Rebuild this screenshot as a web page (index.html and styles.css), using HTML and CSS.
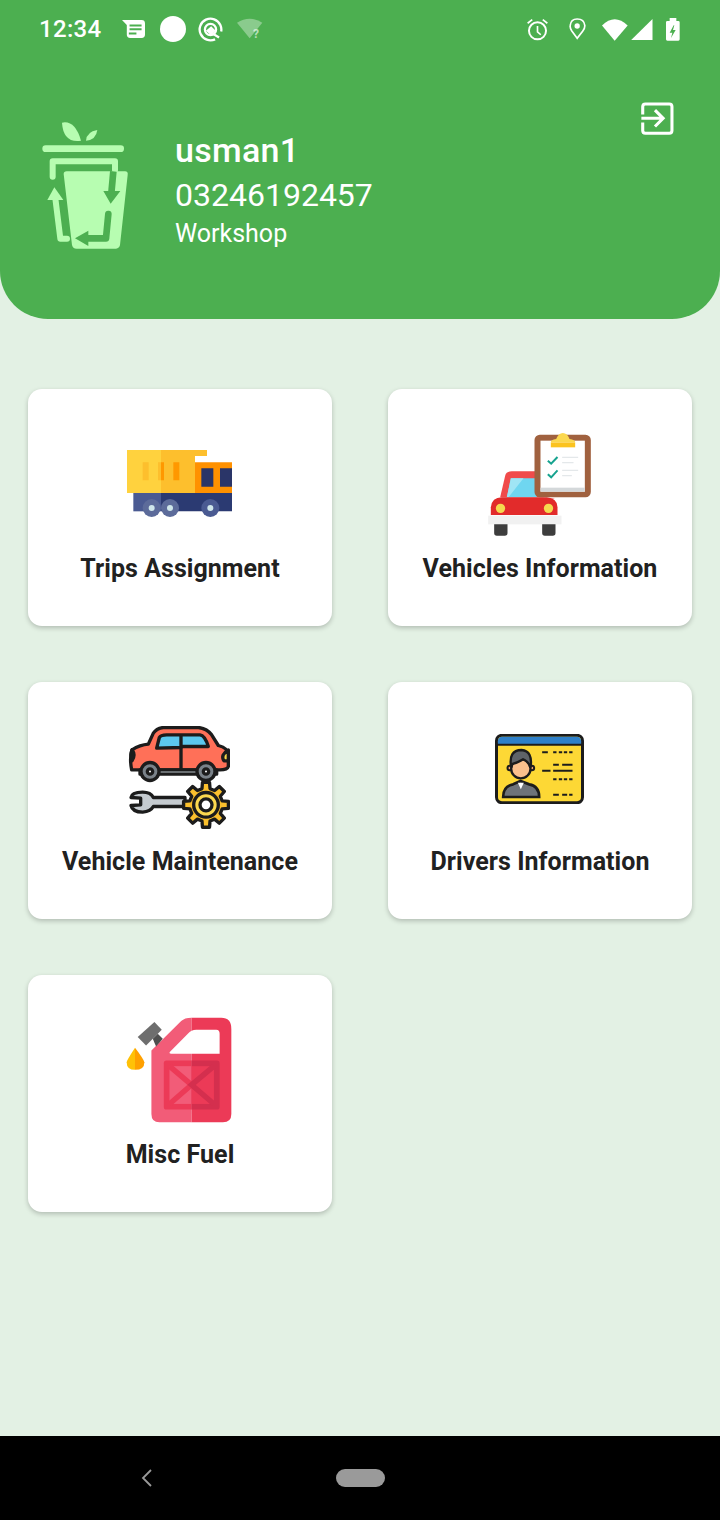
FILE: index.html
```html
<!DOCTYPE html>
<html lang="en">
<head>
  <meta charset="UTF-8">
  <title>Dashboard</title>
  <link rel="stylesheet" href="styles.css">
</head>
<body>
  <div id="page">
    <header id="header">
      <div id="status-bar">
        <span id="clock">12:34</span>
        <svg class="st-news" viewBox="368 58 67 52" width="23" height="18">
          <path fill="#fff" d="M368 58H425Q435 58 435 68V100Q435 110 425 110H392Q382 110 382 100V72Z"/>
          <path fill="#4caf50" d="M390 71H425V77H390ZM390 82H425V88H390ZM388 94H410V100H388Z"/>
        </svg>
        <span class="st-dot"></span>
        <svg class="st-ring" viewBox="596 50 76 76" width="25" height="25">
          <circle cx="634" cy="88" r="33" fill="none" stroke="#fff" stroke-width="7" stroke-dasharray="175 32" transform="rotate(65 634 88)"/>
          <circle cx="634" cy="88" r="17" fill="none" stroke="#fff" stroke-width="7"/>
          <path fill="#fff" d="M620 92L636 78L650 92L636 106Z"/>
          <path stroke="#fff" stroke-width="7" d="M640 100L660 112"/>
        </svg>
        <svg class="st-wifi-q" viewBox="712 48 84 72" width="28" height="24">
          <path fill="#fff" opacity=".35" d="M712 65Q750 42 788 65L750 112Z"/>
          <text x="760" y="111" class="st-q">?</text>
        </svg>
        <div id="status-right">
          <svg viewBox="80 48 68 70" width="23" height="23">
            <circle cx="114" cy="87" r="26" fill="none" stroke="#fff" stroke-width="6"/>
            <path fill="none" stroke="#fff" stroke-width="5" d="M114 72V90L124 99M84 64L98 53M144 64L130 53"/>
          </svg>
          <svg class="st-pin" viewBox="209 49 50 66" width="17" height="22">
            <path fill="none" stroke="#fff" stroke-width="5" d="M233 110L217 88Q211 79 212 72Q214 52 233 52Q254 52 256 72Q256 80 250 88Z"/>
            <circle cx="233" cy="73" r="8" fill="#fff"/>
          </svg>
          <svg class="st-wifi" viewBox="309 44 78 68" width="26" height="23">
            <path fill="#fff" d="M309 66Q347 28 386 66L347 112Z"/>
          </svg>
          <svg class="st-signal" viewBox="394 48 66 64" width="22" height="21">
            <path fill="#fff" d="M459 48V112H394Z"/>
          </svg>
          <svg class="st-batt" viewBox="499 48 42 69" width="14" height="23">
            <path fill="#fff" d="M510 48H530V57H536Q540 57 540 61V112Q540 116 536 116H503Q499 116 499 112V61Q499 57 503 57H510Z"/>
            <path fill="#4caf50" d="M522 70L510 92H518L514 108L528 84H520L524 70Z"/>
          </svg>
        </div>
      </div>

      <div id="profile">
        <svg id="logo" viewBox="60 30 270 390" width="90" height="130">
          <g fill="#b7fdb1">
            <path d="M126 38Q165 30 183 92Q130 100 126 38Z"/>
            <path d="M232 60Q228 90 198 92Q200 65 232 60Z"/>
            <rect x="67" y="106" width="245" height="20" rx="10"/>
            <path d="M131 192Q131 184 140 184H315Q325 184 323 195L300 405Q298 415 288 416H170Q158 416 156 405Z"/>
            <path d="M82 270H130L103 232Z"/>
          </g>
          <g fill="none" stroke="#b7fdb1" stroke-width="18" stroke-linecap="round" stroke-linejoin="round">
            <path d="M98 200V154H285V180"/>
            <path d="M141 386H121L106 265"/>
          </g>
          <g fill="none" stroke="#4caf50" stroke-width="20" stroke-linejoin="round">
            <path d="M280 184L274 250"/>
            <path stroke-linecap="round" d="M265 312L258 385H205"/>
          </g>
          <path fill="#4caf50" d="M250 243H301L272 281ZM205 362L165 385L205 408Z"/>
        </svg>
        <div id="profile-info">
          <div id="user-name">usman1</div>
          <div id="user-phone">03246192457</div>
          <div id="user-role">Workshop</div>
        </div>
        <svg id="exit-icon" viewBox="420 308 100 100" width="34" height="34">
          <path fill="none" stroke="#fff" stroke-width="9" d="M428 345V322Q428 314 436 314H506Q514 314 514 322V392Q514 400 506 400H436Q428 400 428 392V368"/>
          <path fill="none" stroke="#fff" stroke-width="9" d="M424 356H488M464 332L488 356L464 380"/>
        </svg>
      </div>
    </header>

    <main id="menu-grid">
      <div class="card">
        <div class="card-icon">
          <svg viewBox="51 44 315 204" width="105" height="68">
            <path fill="#ffd23e" d="M51 44H153V173H51Z"/>
            <path fill="#fdbf2d" d="M153 44H291V62H255V173H153Z"/>
            <path fill="#ff9100" d="M255 81H366V173H255Z"/>
            <path fill="#fdbf2d" d="M98 81H116V135H98ZM144 81H153V135H144Z"/>
            <path fill="#ff9800" d="M153 81H162V135H153ZM190 81H208V135H190Z"/>
            <path fill="#2a3568" d="M274 99H310V154H274ZM330 99H366V154H330Z"/>
            <path fill="#4a5a92" d="M70 173H153V228H70Z"/>
            <path fill="#2b3a72" d="M153 173H366V228H153Z"/>
            <circle cx="125" cy="218" r="27" fill="#5c6b9a"/>
            <circle cx="180" cy="218" r="27" fill="#5c6b9a"/>
            <circle cx="301" cy="218" r="27" fill="#4a5a92"/>
            <circle cx="125" cy="218" r="9" fill="#cfe6ea"/>
            <circle cx="180" cy="218" r="9" fill="#cfe6ea"/>
            <circle cx="301" cy="218" r="9" fill="#cfe6ea"/>
          </svg>
        </div>
        <div class="card-label">Trips Assignment</div>
      </div>

      <div class="card">
        <div class="card-icon">
          <svg viewBox="24 22 308 309" width="103" height="103">
            <path fill="#f04b4b" d="M60 215L75 150Q78 137 95 137H190V215Z"/>
            <path fill="#6fd6f0" d="M80 215L92 158H170V215Z"/>
            <path fill="#a0e5f5" d="M80 215L92 158H130L85 215Z"/>
            <path fill="#e22b2b" d="M32 268V245Q35 215 65 215H200Q232 218 232 245V268Z"/>
            <circle cx="61" cy="248" r="14" fill="#f5d94f"/>
            <circle cx="205" cy="248" r="14" fill="#f5d94f"/>
            <rect x="24" y="270" width="220" height="26" fill="#f1f1f1"/>
            <path fill="#3d3d3d" d="M42 296H82V322Q82 330 74 330H50Q42 330 42 322ZM186 296H226V322Q226 330 218 330H194Q186 330 186 322Z"/>
            <rect x="163" y="27" width="169" height="188" rx="16" fill="#a0613f"/>
            <rect x="181" y="45" width="133" height="153" fill="#fff"/>
            <rect x="181" y="186" width="133" height="12" fill="#d4d8da"/>
            <path fill="#fbc31f" d="M212 65V50H285V65Z"/>
            <path fill="#fbd84f" d="M212 50Q212 42 228 40Q235 22 248 22Q262 22 268 40Q285 42 285 50Z"/>
            <path fill="none" stroke="#16a38f" stroke-width="6" d="M203 105L213 114L232 94M203 146L213 155L232 134"/>
            <path fill="none" stroke="#e4e8ea" stroke-width="4" d="M246 95H294M246 111H280M246 134H294M246 150H275"/>
          </svg>
        </div>
        <div class="card-label">Vehicles Information</div>
      </div>

      <div class="card">
        <div class="card-icon">
          <svg viewBox="24 14 306 308" width="102" height="103">
            <g stroke="#1c1c1c" stroke-width="10" stroke-linejoin="round">
              <path fill="#ff7058" d="M35 145Q28 110 36 85Q60 70 85 68L100 35Q110 20 130 18H235Q260 20 275 40L295 72Q325 80 325 100V135Q322 145 300 145Z"/>
              <path fill="#5cc8ee" d="M110 80L118 48Q122 40 140 40H183V78ZM183 40H240Q255 42 265 75H183Z"/>
              <path fill="none" d="M183 78V145"/>
              <path fill="#f9d84a" d="M36 85Q48 100 36 118Q30 100 36 85ZM325 85Q300 100 312 118L325 118Z"/>
              <rect x="60" y="145" width="230" height="13" fill="#b8c2c8"/>
              <circle cx="90" cy="150" r="27" fill="#7a8289"/>
              <circle cx="258" cy="150" r="27" fill="#7a8289"/>
              <circle cx="90" cy="150" r="8" fill="#fff"/>
              <circle cx="258" cy="150" r="8" fill="#fff"/>
              <path fill="#c5cbd0" d="M68 212Q35 212 33 228L62 230V250L33 252Q38 272 68 272Q92 270 100 255H195V228H100Q92 212 68 212Z"/>
              <path fill="#fbc02d" transform="translate(258 250)" d="M48.5 -12.1L67.2 -10.6V10.6L48.5 12.1L42.9 25.7L55 40L40 55L25.7 42.9L12.1 48.5L10.6 67.2H-10.6L-12.1 48.5L-25.7 42.9L-40 55L-55 40L-42.9 25.7L-48.5 12.1L-67.2 10.6V-10.6L-48.5 -12.1L-42.9 -25.7L-55 -40L-40 -55L-25.7 -42.9L-12.1 -48.5L-10.6 -67.2H10.6L12.1 -48.5L25.7 -42.9L40 -55L55 -40L42.9 -25.7Z"/>
              <circle cx="258" cy="250" r="37" fill="#fbd84f"/>
              <circle cx="258" cy="250" r="18" fill="#fff"/>
            </g>
          </svg>
        </div>
        <div class="card-label">Vehicle Maintenance</div>
      </div>

      <div class="card">
        <div class="card-icon">
          <svg class="icon-license" viewBox="16 14 266 210" width="89" height="70">
            <rect x="20" y="18" width="258" height="202" rx="16" fill="#fdd835" stroke="#1c1c1c" stroke-width="9"/>
            <path fill="#2f80c8" d="M24 44V36Q24 22 38 22H260Q274 22 274 36V44Z"/>
            <path stroke="#1c1c1c" stroke-width="6" d="M22 46H276"/>
            <path fill="#6e7379" stroke="#1c1c1c" stroke-width="8" d="M40 203Q40 170 70 165L92 155L118 165Q148 170 148 203Z"/>
            <path fill="#fff" d="M84 160H102L93 180Z"/>
            <circle cx="60" cy="116" r="7" fill="#f9a66c" stroke="#1c1c1c" stroke-width="6"/>
            <circle cx="126" cy="116" r="7" fill="#f9a66c" stroke="#1c1c1c" stroke-width="6"/>
            <circle cx="93" cy="118" r="29" fill="#fbc08c" stroke="#1c1c1c" stroke-width="7"/>
            <path fill="#5f6368" stroke="#1c1c1c" stroke-width="7" d="M64 115Q55 62 95 62Q130 65 122 115Q115 95 100 90Q85 100 64 105Z"/>
            <path fill="#1c1c1c" d="M157 66H174V72H157ZM190 66H200V72H190ZM207 66H217V72H207ZM222 66H232V72H222ZM238 66H248V72H238ZM190 103H207V109H190ZM217 103H248V109H217ZM157 121H182V127H157ZM190 121H248V127H190ZM190 147H200V153H190ZM207 147H217V153H207ZM222 147H232V153H222ZM238 147H248V153H238ZM190 193H207V199H190ZM217 193H232V199H217ZM238 193H248V199H238Z"/>
          </svg>
        </div>
        <div class="card-label">Drivers Information</div>
      </div>

      <div class="card">
        <div class="card-icon">
          <svg viewBox="20 20 317 317" width="106" height="106">
            <path fill="#f25c78" d="M96 120L185 32Q195 22 216 22V335H120Q96 335 96 310Z"/>
            <path fill="#ec3a57" d="M216 22H305Q335 22 335 55V310Q335 335 310 335H216Z"/>
            <path fill="#4f4f4f" d="M100 85L115 70L130 85L110 108Z"/>
            <path fill="#6e6e6e" d="M105 35L127 58L80 105L55 80Z"/>
            <path fill="#fff" d="M151 125L205 70Q215 58 230 58H290Q300 58 300 70V130H155Q148 130 151 125Z"/>
            <path fill="#ec3a57" d="M133 158Q133 150 141 150H216V297H141Q133 297 133 289Z"/>
            <path fill="#d42f4e" d="M216 150H292Q300 150 300 158V289Q300 297 292 297H216Z"/>
            <path fill="#f25c78" d="M150 167H216V280H150Z"/>
            <path fill="#ec3a57" d="M216 167H283V280H216Z"/>
            <path fill="none" stroke="#ec3a57" stroke-width="16" d="M150 167L216 223L150 280"/>
            <path fill="none" stroke="#d42f4e" stroke-width="16" d="M283 167L216 223L283 280"/>
            <path fill="#ffc107" d="M47 112Q22 150 22 155Q22 178 47 178Z"/>
            <path fill="#ffa000" d="M47 112Q72 145 75 155Q75 178 47 178Z"/>
          </svg>
        </div>
        <div class="card-label">Misc Fuel</div>
      </div>
    </main>

    <footer id="nav-bar">
      <svg id="nav-back" viewBox="0 0 11 18" width="11" height="18">
        <path fill="none" stroke="#9a9a9a" stroke-width="1.8" d="M10 1L2 9L10 17"/>
      </svg>
      <span id="nav-home"></span>
    </footer>
  </div>
</body>
</html>
```

FILE: styles.css
```css
html, body {
  margin: 0;
  padding: 0;
}

body {
  font-family: Roboto, "Noto Sans", sans-serif;
  background-color: #e3f1e4;
}

svg {
  display: block;
  flex-shrink: 0;
}

#page {
  display: flex;
  flex-direction: column;
  width: 720px;
  height: 1520px;
  overflow: hidden;
}

#header {
  height: 319px;
  background-color: #4caf50;
  border-radius: 0 0 48px 48px;
  color: #fff;
}

#status-bar {
  display: flex;
  align-items: center;
  height: 56px;
  padding: 2px 40px 0 39px;
  box-sizing: border-box;
}

#clock {
  width: 63px;
  font-size: 24px;
  font-weight: 500;
  letter-spacing: 0.3px;
}

.st-news {
  margin-left: 20px;
}

.st-dot {
  width: 26px;
  height: 26px;
  margin-left: 15px;
  border-radius: 50%;
  background-color: #fff;
}

.st-ring {
  margin-left: 12px;
}

.st-wifi-q {
  margin-left: 14px;
}

.st-q {
  font-size: 36px;
  font-weight: 700;
  fill: #fff;
  opacity: 0.6;
}

#status-right {
  display: flex;
  align-items: center;
  margin-left: auto;
}

.st-pin {
  margin-left: 20px;
}

.st-wifi {
  margin-left: 16px;
}

.st-signal {
  margin-left: 3px;
}

.st-batt {
  margin-left: 13px;
}

#profile {
  display: flex;
  align-items: flex-start;
  padding: 46px 46px 0 42px;
}

#logo {
  margin: 18px 0 0 -2px;
}

#profile-info {
  margin: 28px 0 0 45px;
}

#user-name {
  font-size: 34px;
  font-weight: 500;
  line-height: 40px;
  letter-spacing: 0.3px;
}

#user-phone {
  font-size: 32px;
  line-height: 50px;
}

#user-role {
  font-size: 25px;
  line-height: 28px;
}

#exit-icon {
  margin-left: auto;
}

#menu-grid {
  flex: 1;
  display: grid;
  grid-template-columns: 304px 304px;
  grid-auto-rows: 237px;
  gap: 56px;
  padding: 70px 28px 0;
}

.card {
  display: flex;
  flex-direction: column;
  align-items: center;
  padding-top: 40px;
  box-sizing: border-box;
  background-color: #fff;
  border-radius: 14px;
  box-shadow: 0 2px 5px rgba(0, 0, 0, 0.22);
}

.card-icon {
  display: flex;
  align-items: center;
  justify-content: center;
  height: 110px;
  padding-right: 2px;
}

.icon-license {
  margin-bottom: 17px;
}

.card-label {
  margin-top: 15px;
  font-size: 25px;
  font-weight: 700;
  line-height: 30px;
  letter-spacing: 0.05px;
  color: #212121;
}

#nav-bar {
  display: flex;
  align-items: center;
  height: 84px;
  box-sizing: border-box;
  background-color: #000;
}

#nav-back {
  margin-left: 141px;
}

#nav-home {
  width: 49px;
  height: 18px;
  margin-left: 184px;
  border-radius: 9px;
  background-color: #9a9a9a;
}
```
